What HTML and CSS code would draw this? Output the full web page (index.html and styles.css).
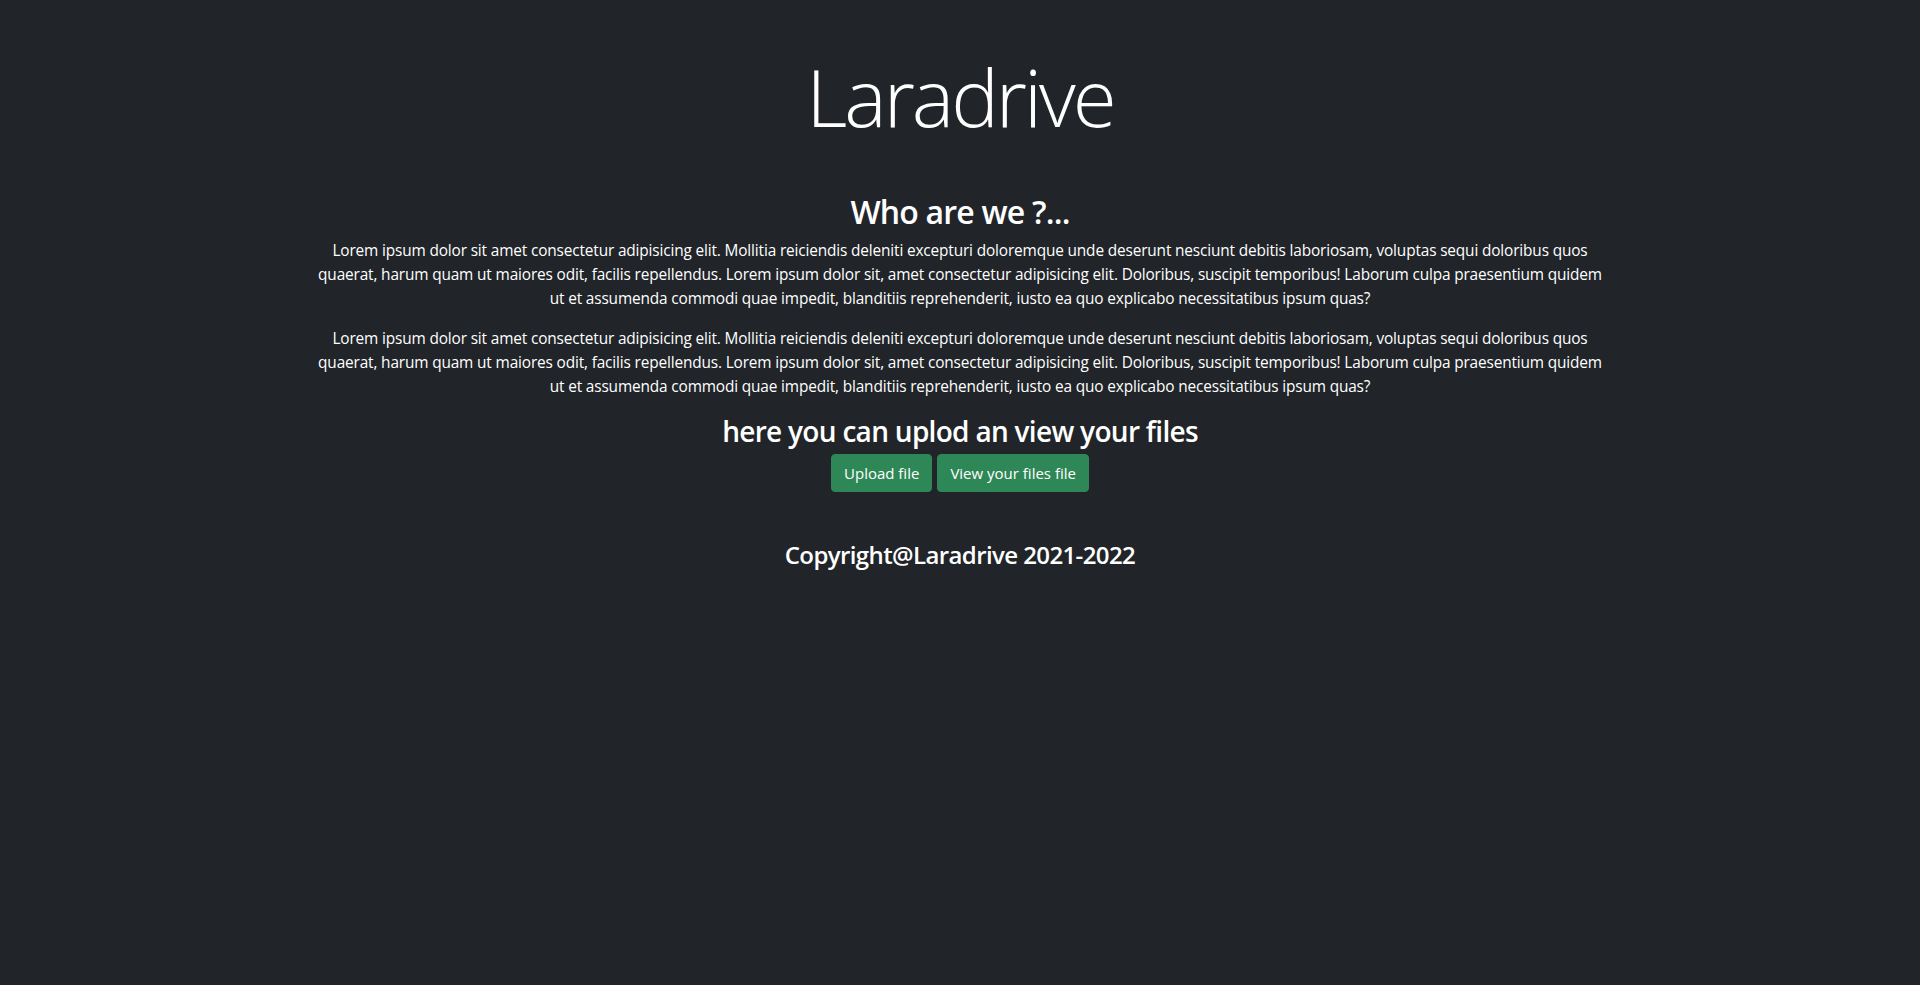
FILE: index.html
```html
<!DOCTYPE html>
<html lang="en">
<head>
<meta charset="utf-8">
<title>Laradrive</title>
<link rel="stylesheet" href="styles.css">
</head>
<body>
<div class="page">
  <header class="hero">
    <h1 class="display">Laradrive</h1>
  </header>
  <main class="container">
    <h2 class="h2">Who are we ?...</h2>
    <p class="lead-text">Lorem ipsum dolor sit amet consectetur adipisicing elit. Mollitia reiciendis deleniti excepturi doloremque unde deserunt nesciunt debitis laboriosam, voluptas sequi doloribus quos<br>quaerat, harum quam ut maiores odit, facilis repellendus. Lorem ipsum dolor sit, amet consectetur adipisicing elit. Doloribus, suscipit temporibus! Laborum culpa praesentium quidem<br>ut et assumenda commodi quae impedit, blanditiis reprehenderit, iusto ea quo explicabo necessitatibus ipsum quas?</p>
    <p class="lead-text">Lorem ipsum dolor sit amet consectetur adipisicing elit. Mollitia reiciendis deleniti excepturi doloremque unde deserunt nesciunt debitis laboriosam, voluptas sequi doloribus quos<br>quaerat, harum quam ut maiores odit, facilis repellendus. Lorem ipsum dolor sit, amet consectetur adipisicing elit. Doloribus, suscipit temporibus! Laborum culpa praesentium quidem<br>ut et assumenda commodi quae impedit, blanditiis reprehenderit, iusto ea quo explicabo necessitatibus ipsum quas?</p>
    <h3 class="h3">here you can uplod an view your files</h3>
    <div class="actions">
      <a class="btn" href="#">Upload file</a>
      <a class="btn" href="#">View your files file</a>
    </div>
  </main>
  <footer class="footer">
    <h4 class="h4">Copyright@Laradrive 2021-2022</h4>
  </footer>
</div>
</body>
</html>
```
FILE: styles.css
```css
html, body {
  margin: 0;
  padding: 0;
  background: #212529;
  height: 100%;
}
body {
  font-family: "Open Sans", "Noto Sans", sans-serif;
  font-size: 16px;
  line-height: 1.5;
  color: #ffffff;
}
.page {
  text-align: center;
}
.hero {
  padding-top: 48px;
}
.display {
  margin: 0;
  font-size: 80px;
  font-weight: 300;
  line-height: 1.2;
  letter-spacing: -3px;
}
.container {
  width: 1296px;
  margin: 0 auto;
  padding-top: 49px;
}
.h2 {
  margin: 0 0 8px;
  font-size: 32px;
  font-weight: 600;
  line-height: 1.2;
  letter-spacing: -0.8px;
}
.lead-text {
  margin: 0 0 16px;
  font-size: 15.4px;
  line-height: 24px;
  letter-spacing: -0.15px;
}
.h3 {
  margin: 0 0 5px;
  font-size: 28px;
  font-weight: 600;
  line-height: 1.2;
  letter-spacing: -0.7px;
}
.actions {
  display: flex;
  justify-content: center;
  gap: 5px;
}
.btn {
  display: inline-block;
  padding: 6px 12px;
  font-size: 15px;
  line-height: 24px;
  color: #ffffff;
  text-decoration: none;
  background: #2e8756;
  border: 1px solid #2e8756;
  border-radius: 4px;
}
.footer {
  padding-top: 49px;
}
.h4 {
  margin: 0;
  font-size: 24px;
  font-weight: 600;
  line-height: 1.2;
  letter-spacing: -0.6px;
}
```
